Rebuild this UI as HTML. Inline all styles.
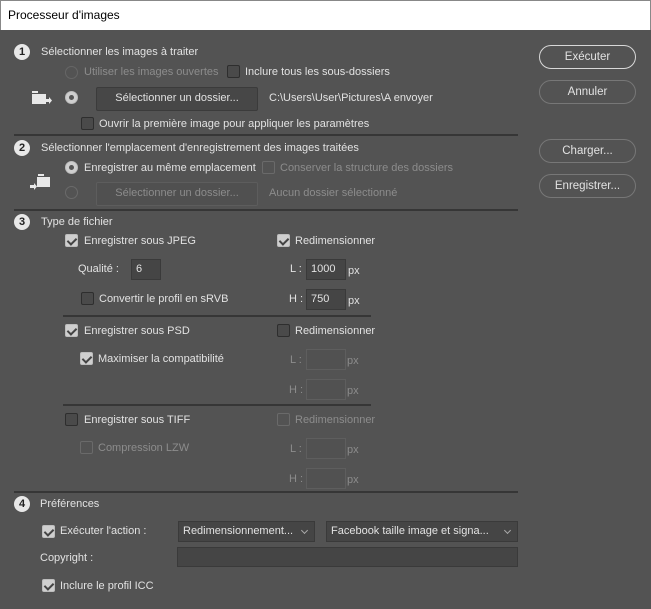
<!DOCTYPE html>
<html><head><meta charset="utf-8"><style>
*{margin:0;padding:0;box-sizing:border-box}
body{width:651px;height:609px;background:#535353;font-family:"Liberation Sans",sans-serif;font-size:11px;color:#e2e2e2;position:relative;overflow:hidden}
.a{position:absolute;white-space:nowrap;line-height:14px}
.d{color:#8c8c8c}
#title{position:absolute;left:0;top:0;width:651px;height:30px;background:#fff;color:#000;font-size:12px;padding:7px 0 0 7px;border:1px solid #888;border-bottom:none}
.num{position:absolute;width:16px;height:16px;border-radius:50%;background:#e8e8e8;color:#222;font-weight:bold;font-size:11px;text-align:center;line-height:16px}
.cb{position:absolute;width:13px;height:13px;border:1px solid #2e2e2e;border-radius:2px;background:#4a4a4a}
.cb.on{background:#cfcfcf;border-color:#bdbdbd}
.cb.on::after{content:"";position:absolute;left:3px;top:1px;width:4px;height:7px;border:solid #444;border-width:0 2px 2px 0;transform:rotate(45deg)}
.cb.dis{border-color:#6a6a6a;background:transparent}
.rd{position:absolute;width:13px;height:13px;border-radius:50%;border:1px solid #6a6a6a}
.rd.on{background:#cfcfcf;border-color:#bdbdbd}
.rd.on::after{content:"";position:absolute;left:3px;top:3px;width:5px;height:5px;border-radius:50%;background:#555}
.btn{position:absolute;background:#474747;border:1px solid #3b3b3b;border-radius:2px;text-align:center;line-height:21px}
.inp{position:absolute;background:#454545;border:1px solid #3a3a3a;padding-left:4px;line-height:18px}
.inp.dis{background:#515151;border-color:#5e5e5e}
.sep{position:absolute;height:2px;background:#363636}
.rb{position:absolute;left:539px;width:97px;height:24px;border:1px solid #777;border-radius:12px;text-align:center;line-height:22px;font-size:11.5px}
.sel{position:absolute;background:#454545;border:1px solid #3a3a3a;padding-left:4px;line-height:18px}
.sel::after{content:"";position:absolute;right:7px;top:6px;width:4px;height:4px;border:solid #aaa;border-width:0 1px 1px 0;transform:rotate(45deg)}
</style></head><body>
<div id="title">Processeur d'images</div>

<div class="rb" style="top:45px;border-color:#d8d8d8">Exécuter</div>
<div class="rb" style="top:80px">Annuler</div>
<div class="rb" style="top:139px">Charger...</div>
<div class="rb" style="top:174px">Enregistrer...</div>

<div class="num" style="left:14px;top:44px">1</div>
<div class="a" style="left:41px;top:45px">Sélectionner les images à traiter</div>
<div class="rd" style="left:65px;top:66px;border-color:#666"></div>
<div class="a d" style="left:84px;top:65px">Utiliser les images ouvertes</div>
<div class="cb" style="left:227px;top:65px"></div>
<div class="a" style="left:245px;top:65px">Inclure tous les sous-dossiers</div>
<svg style="position:absolute;left:32px;top:91px" width="20" height="14"><rect x="0" y="0" width="6" height="2" fill="#e8e8e8"/><rect x="0" y="3" width="14" height="10" fill="#e8e8e8"/><path d="M14 8h3v-2l3 3.5-3 3.5v-2h-3z" fill="#e8e8e8"/></svg>
<div class="rd on" style="left:65px;top:91px"></div>
<div class="btn" style="left:96px;top:87px;width:162px;height:24px">Sélectionner un dossier...</div>
<div class="a" style="left:269px;top:91px">C:\Users\User\Pictures\A envoyer</div>
<div class="cb" style="left:81px;top:117px"></div>
<div class="a" style="left:99px;top:117px">Ouvrir la première image pour appliquer les paramètres</div>
<div class="sep" style="left:14px;top:134px;width:504px"></div>

<div class="num" style="left:14px;top:140px">2</div>
<div class="a" style="left:41px;top:141px">Sélectionner l'emplacement d'enregistrement des images traitées</div>
<div class="rd on" style="left:65px;top:161px"></div>
<div class="a" style="left:84px;top:161px">Enregistrer au même emplacement</div>
<div class="cb dis" style="left:262px;top:161px"></div>
<div class="a d" style="left:280px;top:161px">Conserver la structure des dossiers</div>
<svg style="position:absolute;left:30px;top:174px" width="21" height="17"><rect x="8" y="0" width="6" height="2" fill="#e8e8e8"/><rect x="7" y="3" width="13" height="10" fill="#e8e8e8"/><path d="M0 11h4v-2l3 3.5-3 3.5v-2h-4z" fill="#e8e8e8"/></svg>
<div class="rd" style="left:65px;top:186px"></div>
<div class="btn d" style="left:96px;top:182px;width:162px;height:24px;background:#505050;border-color:#5d5d5d">Sélectionner un dossier...</div>
<div class="a d" style="left:269px;top:186px">Aucun dossier sélectionné</div>
<div class="sep" style="left:14px;top:209px;width:504px"></div>

<div class="num" style="left:14px;top:214px">3</div>
<div class="a" style="left:41px;top:215px">Type de fichier</div>
<div class="cb on" style="left:65px;top:234px"></div>
<div class="a" style="left:84px;top:234px">Enregistrer sous JPEG</div>
<div class="cb on" style="left:277px;top:234px"></div>
<div class="a" style="left:295px;top:234px">Redimensionner</div>
<div class="a" style="left:78px;top:262px">Qualité :</div>
<div class="inp" style="left:131px;top:259px;width:30px;height:21px">6</div>
<div class="a" style="left:290px;top:262px">L :</div>
<div class="inp" style="left:306px;top:259px;width:40px;height:21px">1000</div>
<div class="a" style="left:348px;top:264px">px</div>
<div class="cb" style="left:81px;top:292px"></div>
<div class="a" style="left:99px;top:292px">Convertir le profil en sRVB</div>
<div class="a" style="left:289px;top:292px">H :</div>
<div class="inp" style="left:306px;top:289px;width:40px;height:21px">750</div>
<div class="a" style="left:348px;top:294px">px</div>
<div class="sep" style="left:63px;top:315px;width:308px"></div>

<div class="cb on" style="left:65px;top:324px"></div>
<div class="a" style="left:84px;top:324px">Enregistrer sous PSD</div>
<div class="cb" style="left:277px;top:324px"></div>
<div class="a" style="left:295px;top:324px">Redimensionner</div>
<div class="cb on" style="left:80px;top:352px"></div>
<div class="a" style="left:98px;top:352px">Maximiser la compatibilité</div>
<div class="a d" style="left:290px;top:353px">L :</div>
<div class="inp dis" style="left:306px;top:349px;width:40px;height:21px"></div>
<div class="a d" style="left:347px;top:354px">px</div>
<div class="a d" style="left:289px;top:383px">H :</div>
<div class="inp dis" style="left:306px;top:379px;width:40px;height:21px"></div>
<div class="a d" style="left:347px;top:384px">px</div>
<div class="sep" style="left:63px;top:404px;width:308px"></div>

<div class="cb" style="left:65px;top:413px"></div>
<div class="a" style="left:84px;top:413px">Enregistrer sous TIFF</div>
<div class="cb dis" style="left:277px;top:413px"></div>
<div class="a d" style="left:295px;top:413px">Redimensionner</div>
<div class="cb dis" style="left:80px;top:441px"></div>
<div class="a d" style="left:98px;top:441px">Compression LZW</div>
<div class="a d" style="left:290px;top:442px">L :</div>
<div class="inp dis" style="left:306px;top:438px;width:40px;height:21px"></div>
<div class="a d" style="left:347px;top:443px">px</div>
<div class="a d" style="left:289px;top:472px">H :</div>
<div class="inp dis" style="left:306px;top:468px;width:40px;height:21px"></div>
<div class="a d" style="left:347px;top:473px">px</div>
<div class="sep" style="left:14px;top:491px;width:504px"></div>

<div class="num" style="left:14px;top:496px">4</div>
<div class="a" style="left:40px;top:497px">Préférences</div>
<div class="cb on" style="left:42px;top:525px"></div>
<div class="a" style="left:60px;top:524px">Exécuter l'action :</div>
<div class="sel" style="left:178px;top:521px;width:137px;height:21px">Redimensionnement...</div>
<div class="sel" style="left:326px;top:521px;width:192px;height:21px">Facebook taille image et signa...</div>
<div class="a" style="left:40px;top:551px">Copyright :</div>
<div class="inp" style="left:177px;top:547px;width:341px;height:20px"></div>
<div class="cb on" style="left:42px;top:579px"></div>
<div class="a" style="left:60px;top:579px">Inclure le profil ICC</div>
</body></html>
